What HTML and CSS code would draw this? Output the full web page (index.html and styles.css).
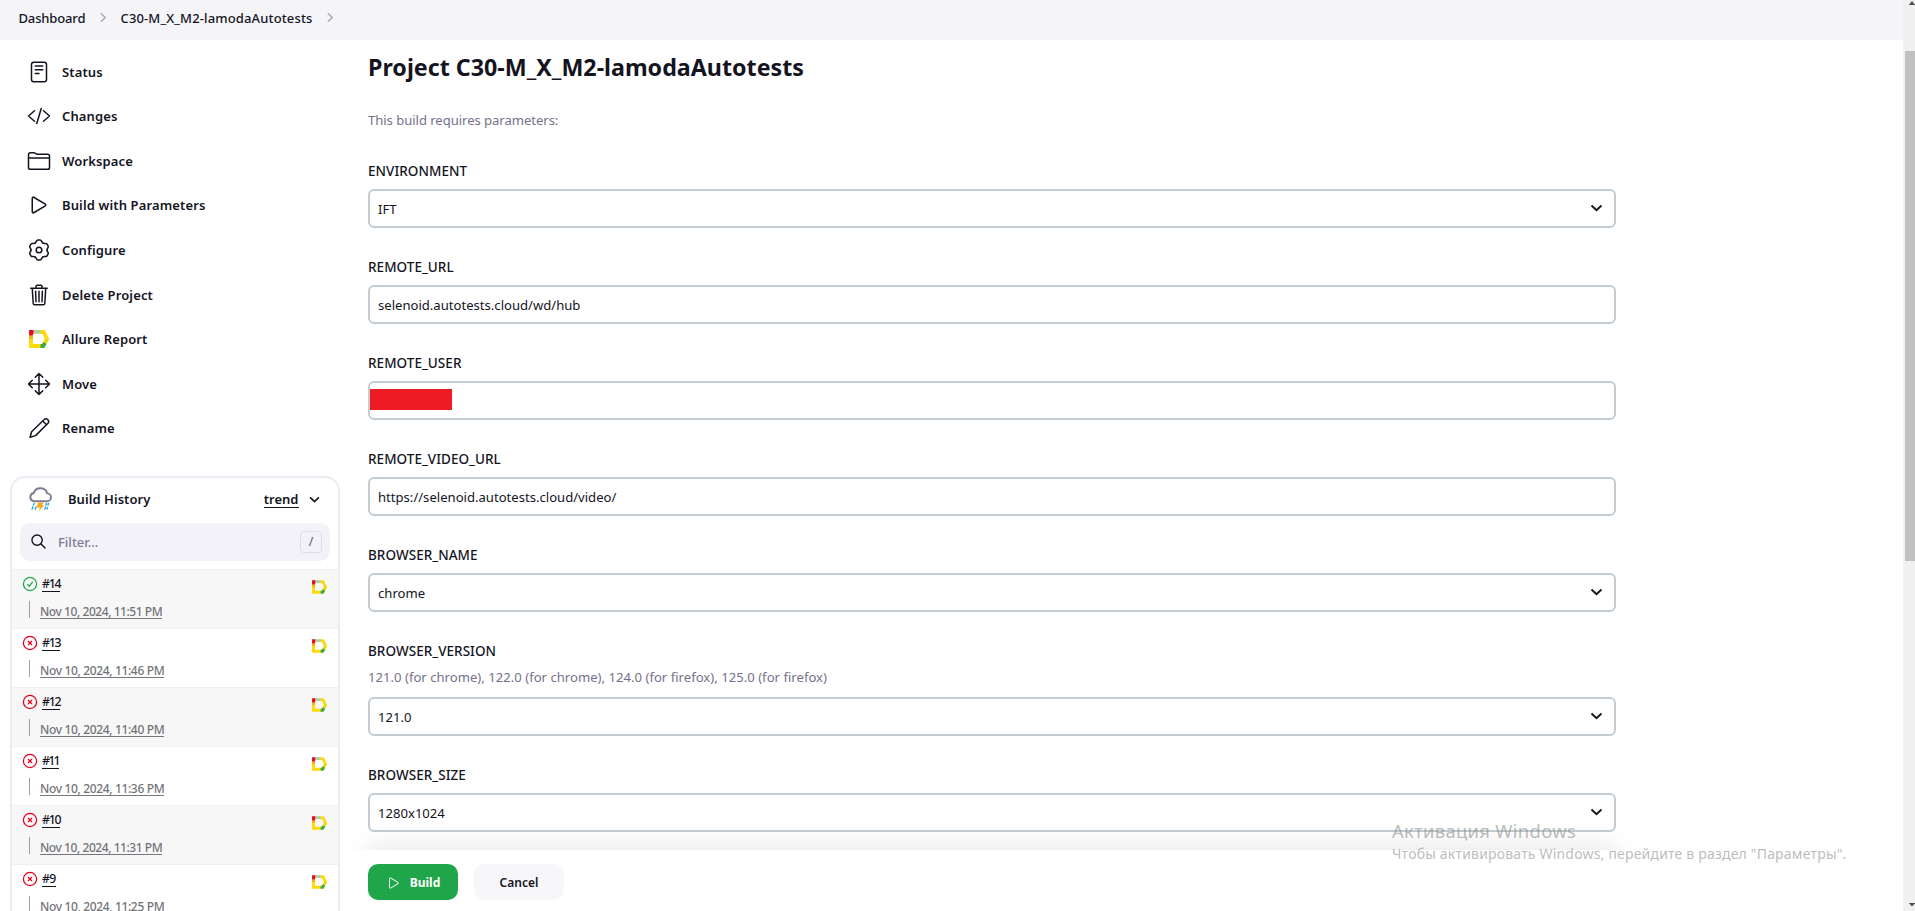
FILE: index.html
```html
<!DOCTYPE html>
<html lang="en">
<head>
<meta charset="utf-8">
<title>C30-M_X_M2-lamodaAutotests</title>
<link rel="stylesheet" href="styles.css">
</head>
<body>
<svg class="defs" aria-hidden="true">
  <symbol id="allure" viewBox="0 0 20 18">
    <path d="M2 4V16H13" stroke="#ffd90a"/>
    <path d="M11 2H14.6L18 9L15 14.500" stroke="#ffd90a"/>
    <path d="M18 9L16.500 12" stroke="#e3dc12"/>
    <path d="M5 1.800H11.500" stroke="#a8d2a0"/>
    <path d="M2 6V9" stroke="#f0b414"/>
    <path d="M4.600 2H2V5.500" stroke="#e30b1c"/>
    <path d="M16 13L14.200 16H11.500" stroke="#3cab45"/>
  </symbol>
  <symbol id="chevron" viewBox="0 0 12 8"><path d="M1 1.500L6 6.300L11 1.500"/></symbol>
  <symbol id="crumb" viewBox="0 0 7 12"><path d="M1 1L6 6L1 11"/></symbol>
  <symbol id="failed" viewBox="0 0 16 16"><circle cx="8" cy="8" r="6.600"/><path d="M6 6L10 10M10 6L6 10"/></symbol>
  <symbol id="passed" viewBox="0 0 16 16"><circle cx="8" cy="8" r="6.600"/><path d="M5.400 8.300L7.200 10.200L10.700 5.900"/></symbol>
  <symbol id="play" viewBox="0 0 512 512"><path d="M112 111v290c0 17.440 17 28.520 31 20.160l247.900-148.370c12.120-7.250 12.120-26.330 0-33.580L143 90.840c-14-8.360-31 2.720-31 20.160z"/></symbol>
  <path id="cog-tooth" d="M-4-6.930C-2.300-7.900-2.900-9.900-1-9.900H1C2.900-9.900 2.300-7.900 4-6.930"/>
</svg>

<div class="app">
  <div class="page">
    <nav class="crumbs">
      <span class="crumb crumb-home">Dashboard</span><svg class="sep"><use href="#crumb"/></svg>
      <span class="crumb crumb-job">C30-M_X_M2-lamodaAutotests</span><svg class="sep"><use href="#crumb"/></svg>
    </nav>
    <div class="columns">
      <aside class="side">
        <ul class="tasks">
          <li><svg class="icon" viewBox="0 0 512 512"><rect x="96" y="48" width="320" height="416" rx="48"/><path d="M176 128h160M176 208h160M176 288h80"/></svg>Status</li>
          <li><svg class="icon" viewBox="0 0 512 512"><path d="M160 368L32 256l128-112M352 368l128-112-128-112M304 96l-96 320"/></svg>Changes</li>
          <li><svg class="icon" viewBox="0 0 512 512"><path d="M440 432H72a40 40 0 01-40-40V120a40 40 0 0140-40h75.890a40 40 0 0122.190 6.720l27.840 18.560a40 40 0 0022.190 6.720H440a40 40 0 0140 40v240a40 40 0 01-40 40zM32 192h448"/></svg>Workspace</li>
          <li><svg class="icon"><use href="#play"/></svg>Build with Parameters</li>
          <li><svg class="icon cog" viewBox="-12 -12 24 24"><circle r="2.800"/><use href="#cog-tooth"/><use href="#cog-tooth" transform="rotate(60)"/><use href="#cog-tooth" transform="rotate(120)"/><use href="#cog-tooth" transform="rotate(180)"/><use href="#cog-tooth" transform="rotate(240)"/><use href="#cog-tooth" transform="rotate(300)"/></svg>Configure</li>
          <li><svg class="icon" viewBox="0 0 512 512"><path d="M112 112l20 320c.95 18.490 14.400 32 32 32h184c18.670 0 31.460-13.510 32-32l20-320M80 112h352M192 112V72a24 24 0 0124-24h80a24 24 0 0124 24v40M256 176v224M184 176l8 224M328 176l-8 224"/></svg>Delete Project</li>
          <li><svg class="allure-task"><use href="#allure"/></svg>Allure Report</li>
          <li><svg class="icon" viewBox="0 0 512 512"><path d="M176 112l80-80 80 80M256 32v448M176 400l80 80 80-80M400 176l80 80-80 80M112 176l-80 80 80 80M32 256h448"/></svg>Move</li>
          <li><svg class="icon cog" viewBox="0 0 24 24"><path d="M3 21.300L4.600 15.700L17.200 3.500A2.700 2.700 0 0121 7.300L8.600 19.600ZM15.800 5L19.500 8.700"/></svg>Rename</li>
        </ul>

        <section class="history">
          <header class="history-head">
            <svg class="weather" viewBox="0 0 24 24">
              <path class="cloud" d="M5.500 14.200H19A3.900 3.900 0 0019.200 6.400C18.400 3.300 15.600 1.300 12.300 1.300C9.200 1.300 6.600 3.300 5.800 6A4.200 4.200 0 005.500 14.200Z"/>
              <path class="drop" d="M6.200 16.500L5.500 18M4.800 20L4.100 22M8 20L7.400 22M18.400 16.500L17.900 18M20.500 16.500L20 18M17.500 20L16.800 22M19.500 20.500L19 22"/>
              <path class="bolt" d="M10 15.500H15.500L14.300 18H16.500L11 24L11.800 20.500H8.500Z"/>
            </svg>
            <span class="history-title">Build History</span>
            <span class="trend">trend</span>
            <svg class="chev-small"><use href="#chevron"/></svg>
          </header>
          <div class="filter">
            <svg class="search" viewBox="0 0 16 16"><circle cx="6.500" cy="6.500" r="5.500"/><path d="M10.500 10.500L15 15"/></svg>
            <span class="filter-text">Filter...</span>
            <kbd class="key">/</kbd>
          </div>
          <div class="builds">
            <div class="build"><svg class="state ok"><use href="#passed"/></svg><span class="num">#14</span><svg class="allure-row"><use href="#allure"/></svg><span class="date date-narrow">Nov 10, 2024, 11:51 PM</span></div>
            <div class="build"><svg class="state"><use href="#failed"/></svg><span class="num">#13</span><svg class="allure-row"><use href="#allure"/></svg><span class="date">Nov 10, 2024, 11:46 PM</span></div>
            <div class="build"><svg class="state"><use href="#failed"/></svg><span class="num">#12</span><svg class="allure-row"><use href="#allure"/></svg><span class="date">Nov 10, 2024, 11:40 PM</span></div>
            <div class="build"><svg class="state"><use href="#failed"/></svg><span class="num num-narrow">#11</span><svg class="allure-row"><use href="#allure"/></svg><span class="date">Nov 10, 2024, 11:36 PM</span></div>
            <div class="build"><svg class="state"><use href="#failed"/></svg><span class="num">#10</span><svg class="allure-row"><use href="#allure"/></svg><span class="date date-narrow">Nov 10, 2024, 11:31 PM</span></div>
            <div class="build"><svg class="state"><use href="#failed"/></svg><span class="num num-short">#9</span><svg class="allure-row"><use href="#allure"/></svg><span class="date">Nov 10, 2024, 11:25 PM</span></div>
          </div>
        </section>
      </aside>

      <main class="main">
        <div class="form">
          <h1>Project C30-M_X_M2-lamodaAutotests</h1>
          <p class="intro">This build requires parameters:</p>
          <div class="param"><div class="label">ENVIRONMENT</div><div class="field">IFT<svg class="chev"><use href="#chevron"/></svg></div></div>
          <div class="param"><div class="label">REMOTE_URL</div><div class="field">selenoid.autotests.cloud/wd/hub</div></div>
          <div class="param"><div class="label">REMOTE_USER</div><div class="field field-masked"><span class="mask"></span></div></div>
          <div class="param"><div class="label">REMOTE_VIDEO_URL</div><div class="field">https://selenoid.autotests.cloud/video/</div></div>
          <div class="param"><div class="label">BROWSER_NAME</div><div class="field">chrome<svg class="chev"><use href="#chevron"/></svg></div></div>
          <div class="param"><div class="label">BROWSER_VERSION</div><div class="hint">121.0 (for chrome), 122.0 (for chrome), 124.0 (for firefox), 125.0 (for firefox)</div><div class="field">121.0<svg class="chev"><use href="#chevron"/></svg></div></div>
          <div class="param"><div class="label">BROWSER_SIZE</div><div class="field">1280x1024<svg class="chev"><use href="#chevron"/></svg></div></div>
        </div>
        <footer class="actions">
          <div class="shade"><div class="shade-source"></div></div>
          <button class="btn btn-primary"><svg class="btn-icon"><use href="#play"/></svg>Build</button>
          <button class="btn">Cancel</button>
        </footer>
      </main>
    </div>
  </div>
  <div class="scrollbar">
    <svg class="arrow" viewBox="0 0 8 5"><path d="M0 5L4 0L8 5Z"/></svg>
    <div class="thumb"></div>
    <svg class="arrow arrow-down" viewBox="0 0 8 5"><path d="M0 0H8L4 4.500Z"/></svg>
  </div>
</div>

<div class="watermark">
  <div class="wm-title">Активация Windows</div>
  <div class="wm-text">Чтобы активировать Windows, перейдите в раздел "Параметры".</div>
</div>
</body>
</html>
```
FILE: styles.css
```css
* { box-sizing: border-box; }
body {
  margin: 0;
  height: 911px;
  overflow: hidden;
  background: #fff;
  color: #14141f;
  font: 400 13.1px/20px "Noto Sans", "Open Sans", sans-serif;
}
svg { display: block; flex: none; fill: none; overflow: visible; }
.defs { position: absolute; width: 0; height: 0; }
.app { display: flex; height: 911px; overflow: hidden; }
.page { width: 1903px; flex: none; display: flex; flex-direction: column; }

/* breadcrumbs */
.crumbs {
  display: flex;
  flex: none;
  align-items: center;
  height: 40px;
  padding: 0 0 4px 18.5px;
  background: #f5f5f8;
  font-size: 13px;
  font-weight: 500;
  white-space: nowrap;
}
.crumb-home { width: 67px; letter-spacing: -.15px; }
.crumb-job { width: 192px; margin-left: 14.500px; letter-spacing: .14px; }
.sep { width: 6px; height: 11px; margin: -2px 0 0 14.500px; stroke: #a9a9bd; stroke-width: 1.800; }

.columns { display: flex; flex: 1; min-height: 0; }
.side { width: 368px; flex: none; padding: 9.500px 0 0 10px; }

/* side tasks */
.tasks { margin: 0; padding: 0; list-style: none; }
.tasks li {
  display: flex;
  align-items: center;
  height: 44.560px;
  padding-left: 17px;
  font-size: 13px;
  font-weight: 570;
  letter-spacing: .13px;
}
.icon { width: 24px; height: 24px; margin-right: 11px; stroke: #14141f; stroke-width: 32; stroke-linecap: round; stroke-linejoin: round; }
.cog { stroke-width: 1.500; }
.allure-task { width: 20px; height: 18px; margin: 0 13px 0 2px; stroke-width: 3.800; }

/* build history */
.history {
  width: 330px;
  height: 500px;
  margin-top: 25.500px;
  border: 2px solid #edebf3;
  border-radius: 15px;
  overflow: hidden;
}
.history-head { display: flex; align-items: center; height: 45px; padding: 0 18px 2px 16px; font-size: 13px; font-weight: 570; }
.weather { width: 24px; height: 24px; }
.cloud { stroke: #7c7c95; stroke-width: 1.900; }
.drop { stroke: #2aa5e4; stroke-width: 1.400; stroke-linecap: round; }
.bolt { fill: #fbab1c; }
.history-title { margin-left: 16px; letter-spacing: .05px; }
.trend { margin-left: auto; line-height: 16px; border-bottom: 1px solid #14141f; }
.chev-small { width: 11px; height: 7px; margin-left: 10.500px; stroke: #14141f; stroke-width: 1.900; }
.filter {
  display: flex;
  align-items: center;
  width: 310px;
  height: 38px;
  margin: 0 0 0 8px;
  padding: 0 8px 0 11px;
  border-radius: 10px;
  background: #f3f2f8;
}
.search { width: 15px; height: 15px; stroke: #14141f; stroke-width: 1.500; stroke-linecap: round; }
.filter-text { margin-left: 12px; color: #7d7b95; font-size: 13px; font-weight: 550; }
.key {
  width: 22px;
  height: 22px;
  margin-left: auto;
  border: 1px solid #dfdee8;
  border-radius: 4px;
  color: #6c6b80;
  font: 500 12px/20px "Noto Sans", sans-serif;
  text-align: center;
}
.builds { margin-top: 8px; }
.build {
  display: grid;
  grid-template-columns: 16px 1fr 15px;
  grid-template-rows: 29px 29px;
  height: 59px;
  padding: 0 11px 0 10px;
  border-top: 1px solid #f1f1f1;
}
.build:nth-child(odd) { background: #f7f7f7; }
.state { width: 16px; height: 16px; margin-top: 6px; stroke: #e6001f; stroke-width: 1.250; }
.ok { stroke: #1ea64b; }
.num {
  justify-self: start;
  height: 17px;
  margin: 5px 0 0 4px;
  border-bottom: 1px solid #14141f;
  font-size: 12.300px;
  font-weight: 500;
  line-height: 18px;
  letter-spacing: -1.250px;
}
.num-narrow { letter-spacing: -1.750px; }
.num-short { letter-spacing: -.7px; }
.allure-row { width: 15px; height: 14px; margin-top: 10px; stroke-width: 3.800; }
.date {
  grid-column: 1 / 4;
  justify-self: start;
  position: relative;
  height: 18px;
  margin: 2px 0 0 18px;
  border-bottom: 1px solid #777780;
  color: #747478;
  font-size: 12px;
  font-weight: 480;
  letter-spacing: -.35px;
  line-height: 21px;
}
.date-narrow { letter-spacing: -.44px; }
.date::before { content: ""; position: absolute; left: -11px; top: 0; width: 1px; height: 17px; background: #9aa0a6; }

/* parameters form */
.main { position: relative; width: 1248px; height: 871px; overflow: visible; }
h1 { margin: 7px 0 0; font-size: 23.250px; font-weight: 700; line-height: 40px; }
.intro { margin: 23px 0 31px; color: #74728b; letter-spacing: -.05px; }
.param { margin-bottom: 29px; }
.label { margin-bottom: 8px; font-size: 13.500px; font-weight: 540; letter-spacing: .04px; }
.hint { margin: -2px 0 10px; color: #74728b; letter-spacing: .015px; }
.field {
  display: flex;
  align-items: center;
  justify-content: space-between;
  height: 39px;
  padding: 0 11px 0 8px;
  border: 2px solid #c3cdd1;
  border-radius: 6px;
}
.field-masked { padding: 0; }
.mask { width: 82px; height: 21px; margin-top: -2px; background: #ed1c24; }
.chev { width: 13px; height: 8px; margin-top: -1px; stroke: #14141f; stroke-width: 1.900; }

/* sticky action bar */
.actions {
  position: absolute;
  left: 0;
  bottom: 0;
  width: 100%;
  height: 61px;
  display: flex;
  gap: 16px;
  padding-top: 14px;
  background: #fff;
}
.shade { position: absolute; left: -30px; right: -30px; bottom: 100%; height: 36px; overflow: hidden; }
.shade-source { height: 60px; margin: 36px 30px 0; box-shadow: 0 0 30px rgba(0, 0, 0, .12); }
.btn {
  display: flex;
  align-items: center;
  justify-content: center;
  width: 90px;
  height: 36px;
  padding: 1px 0 0;
  border: 0;
  border-radius: 10px;
  background: #f7f7fa;
  color: #14141f;
  font: 600 12px/20px "Noto Sans", sans-serif;
}
.btn-primary { background: #1fa64a; color: #fff; font-weight: 700; }
.btn-icon { width: 16px; height: 16px; margin-right: 8px; stroke: #fff; stroke-width: 32; }

/* window scrollbar */
.scrollbar { width: 16px; flex: none; display: flex; flex-direction: column; padding: 1px 0 4px 2px; background: #f0f0f0; }
.arrow { width: 8px; height: 4px; margin-left: 3px; fill: #505050; }
.arrow-down { margin-top: auto; }
.thumb { height: 510px; margin-top: 46px; background: #c1c1c1; }

/* system activation notice */
.watermark { position: absolute; left: 1392px; top: 820px; color: rgba(130, 130, 130, .55); white-space: nowrap; }
.wm-title { font-size: 18.400px; line-height: 22px; letter-spacing: .32px; }
.wm-text { font-size: 14px; line-height: 24px; letter-spacing: .19px; }
```
